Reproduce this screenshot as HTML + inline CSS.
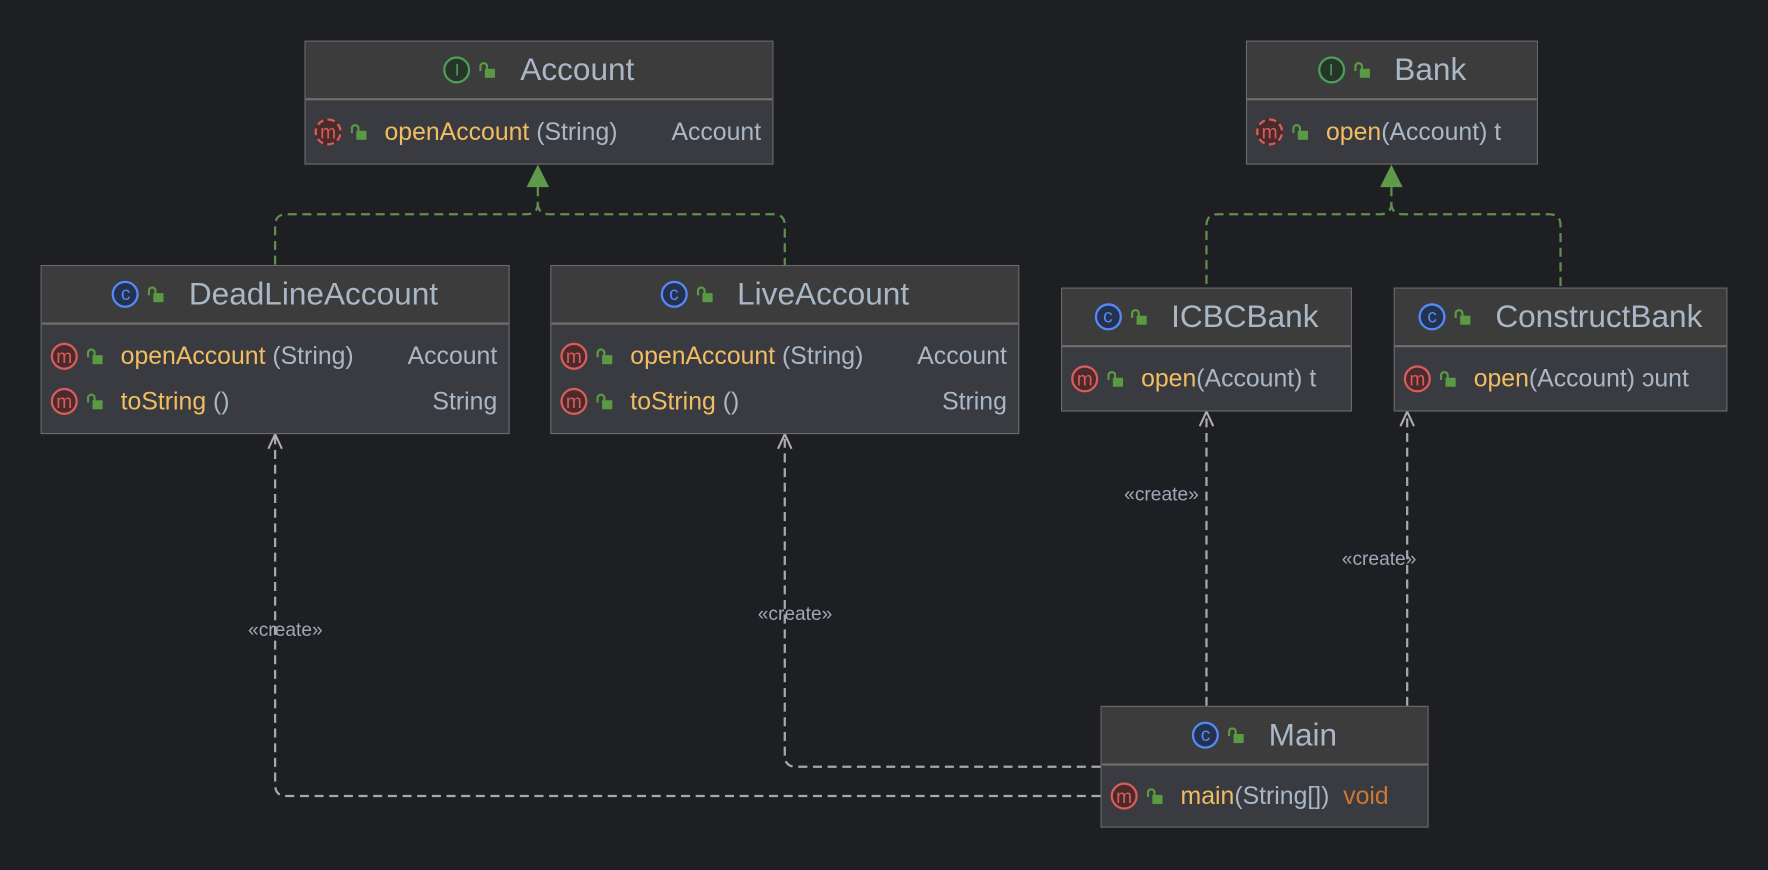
<!DOCTYPE html>
<html><head><meta charset="utf-8"><style>
html,body{margin:0;padding:0;background:#1e1f22;width:1768px;height:870px;overflow:hidden}
#w{position:absolute;left:0;top:0;width:1568px;height:772px;transform:scale(1.12755);transform-origin:0 0;font-family:"Liberation Sans",sans-serif}
.b{position:absolute;border:1.5px solid #6a6a6a;background:#393b40;box-sizing:border-box;overflow:hidden}
.h{background:#3c3c3c;border-bottom:2px solid #6e6e6e;height:52px;box-sizing:border-box;display:flex;align-items:center;justify-content:center;color:#a9b7c6;font-size:28px}
.r{height:40px;display:flex;align-items:center;font-size:22px;color:#a9b7c6;white-space:nowrap;padding-left:8px;position:relative}
.rows{padding-top:8px}
.ic{width:24px;height:24px;border-radius:50%;box-sizing:border-box;display:inline-flex;align-items:center;justify-content:center;font-size:17px;margin-right:8px;flex:none}
.c{border:2px solid #548af7;color:#548af7;background:#25324d}
.i{border:2px solid #4f9d5a;color:#4f9d5a;background:#253528;font-size:15px}
.m{border:2px solid #db5c5c;color:#db5c5c;background:#4a2a2a;line-height:1}
.md{border:2px dashed #db5c5c}
.lk{width:14px;height:14px;position:relative;margin-right:16px;flex:none}
.lk:before{content:"";position:absolute;left:5px;bottom:0;width:9px;height:8px;background:#5a9a43}
.lk:after{content:"";position:absolute;left:0;top:0;width:4px;height:6px;border:2px solid #5a9a43;border-bottom:none;border-radius:4px 4px 0 0}
.h .lk{margin-right:22px}
.n{color:#f2bd62}
.rt{position:absolute;right:10px}
.v{color:#cc7832}
.lbl{position:absolute;color:#a0a8b6;font-size:17px}
</style></head><body><div id="w">
<svg width="1568" height="772" style="position:absolute;left:0;top:0">
<g fill="none" stroke="#5f8f4a" stroke-width="2" stroke-dasharray="8,5">
<path d="M477 166 V180 Q477 190 467 190 H254 Q244 190 244 200 V235"/>
<path d="M477 180 Q477 190 487 190 H686 Q696 190 696 200 V235"/>
<path d="M1234 166 V180 Q1234 190 1224 190 H1080 Q1070 190 1070 200 V255"/>
<path d="M1234 180 Q1234 190 1244 190 H1374 Q1384 190 1384 200 V255"/>
</g>
<polygon points="477,146 467,166 487,166" fill="#5f9a4a"/>
<polygon points="1234,146 1224,166 1244,166" fill="#5f9a4a"/>
<g fill="none" stroke="#a8a8a8" stroke-width="2" stroke-dasharray="8,5">
<path d="M976 706 H254 Q244 706 244 696 V386"/>
<path d="M976 680 H706 Q696 680 696 670 V386"/>
<path d="M1070 626 V366"/>
<path d="M1248 626 V366"/>
</g>
<g fill="none" stroke="#b0b0b0" stroke-width="1.8">
<path d="M238 398 L244 385 L250 398"/><path d="M690 398 L696 385 L702 398"/>
<path d="M1064 378 L1070 365 L1076 378"/><path d="M1242 378 L1248 365 L1254 378"/>
</g>
</svg>
<div class="lbl" style="left:220px;top:549px">«create»</div>
<div class="lbl" style="left:672px;top:535px">«create»</div>
<div class="lbl" style="left:997px;top:429px">«create»</div>
<div class="lbl" style="left:1190px;top:486px">«create»</div>

<div class="b" style="left:270px;top:36px;width:416px;height:110px"><div class="h"><span class="ic i">I</span><span class="lk"></span>Account</div>
<div class="r" style="height:56px"><span class="ic m md">m</span><span class="lk"></span><span class="n">openAccount</span>&nbsp;(String)<span class="rt">Account</span></div></div>

<div class="b" style="left:1105px;top:36px;width:259px;height:110px"><div class="h"><span class="ic i">I</span><span class="lk"></span>Bank</div>
<div class="r" style="height:56px"><span class="ic m md">m</span><span class="lk"></span><span class="n">open</span>(Account) t</div></div>

<div class="b" style="left:36px;top:235px;width:416px;height:150px"><div class="h"><span class="ic c">c</span><span class="lk"></span>DeadLineAccount</div>
<div class="rows"><div class="r"><span class="ic m">m</span><span class="lk"></span><span class="n">openAccount</span>&nbsp;(String)<span class="rt">Account</span></div>
<div class="r"><span class="ic m">m</span><span class="lk"></span><span class="n">toString</span>&nbsp;()<span class="rt">String</span></div></div></div>

<div class="b" style="left:488px;top:235px;width:416px;height:150px"><div class="h"><span class="ic c">c</span><span class="lk"></span>LiveAccount</div>
<div class="rows"><div class="r"><span class="ic m">m</span><span class="lk"></span><span class="n">openAccount</span>&nbsp;(String)<span class="rt">Account</span></div>
<div class="r"><span class="ic m">m</span><span class="lk"></span><span class="n">toString</span>&nbsp;()<span class="rt">String</span></div></div></div>

<div class="b" style="left:941px;top:255px;width:258px;height:110px"><div class="h"><span class="ic c">c</span><span class="lk"></span>ICBCBank</div>
<div class="r" style="height:56px"><span class="ic m">m</span><span class="lk"></span><span class="n">open</span>(Account) t</div></div>

<div class="b" style="left:1236px;top:255px;width:296px;height:110px"><div class="h"><span class="ic c">c</span><span class="lk"></span>ConstructBank</div>
<div class="r" style="height:56px"><span class="ic m">m</span><span class="lk"></span><span class="n">open</span>(Account) ɔunt</div></div>

<div class="b" style="left:976px;top:626px;width:291px;height:108px"><div class="h"><span class="ic c">c</span><span class="lk"></span>Main</div>
<div class="r" style="height:54px"><span class="ic m">m</span><span class="lk"></span><span class="n">main</span>(String[])&nbsp;&nbsp;<span class="v">void</span></div></div>
</div></body></html>
